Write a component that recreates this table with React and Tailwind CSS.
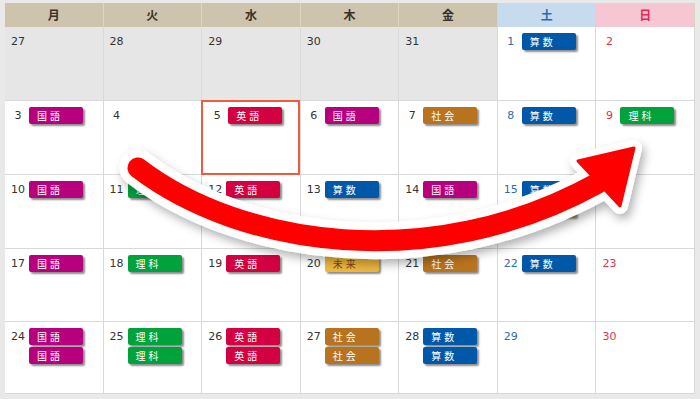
import React from "react";

const tagColors = {
  国語: "bg-[#b6007e] text-white",
  英語: "bg-[#d30042] text-white",
  理科: "bg-[#00a23b] text-white",
  算数: "bg-[#0058a9] text-white",
  社会: "bg-[#b8731e] text-white",
  未来: "bg-[#efb73c] text-[#7a4a10]",
};

const weeks = [
  [
    { d: 27, prev: true },
    { d: 28, prev: true },
    { d: 29, prev: true },
    { d: 30, prev: true },
    { d: 31, prev: true },
    { d: 1, tags: ["算数"] },
    { d: 2 },
  ],
  [
    { d: 3, tags: ["国語"] },
    { d: 4 },
    { d: 5, tags: ["英語"], active: true },
    { d: 6, tags: ["国語"] },
    { d: 7, tags: ["社会"] },
    { d: 8, tags: ["算数"] },
    { d: 9, tags: ["理科"] },
  ],
  [
    { d: 10, tags: ["国語"] },
    { d: 11, tags: ["理科"] },
    { d: 12, tags: ["英語"] },
    { d: 13, tags: ["算数"] },
    { d: 14, tags: ["国語"] },
    { d: 15, tags: ["算数", "社会"] },
    { d: 16 },
  ],
  [
    { d: 17, tags: ["国語"] },
    { d: 18, tags: ["理科"] },
    { d: 19, tags: ["英語"] },
    { d: 20, tags: ["未来"] },
    { d: 21, tags: ["社会"] },
    { d: 22, tags: ["算数"] },
    { d: 23 },
  ],
  [
    { d: 24, tags: ["国語", "国語"] },
    { d: 25, tags: ["理科", "理科"] },
    { d: 26, tags: ["英語", "英語"] },
    { d: 27, tags: ["社会", "社会"] },
    { d: 28, tags: ["算数", "算数"] },
    { d: 29 },
    { d: 30 },
  ],
];

const rowHeights = ["h-[74px]", "h-[74px]", "h-[74px]", "h-[73px]", "h-[72px]"];

const heads = [
  { t: "月", c: "bg-[#cec3ad] text-[#3a3226]" },
  { t: "火", c: "bg-[#cec3ad] text-[#3a3226]" },
  { t: "水", c: "bg-[#cec3ad] text-[#3a3226]" },
  { t: "木", c: "bg-[#cec3ad] text-[#3a3226]" },
  { t: "金", c: "bg-[#cec3ad] text-[#3a3226]" },
  { t: "土", c: "bg-[#c6dbee] text-[#2c6bb3]" },
  { t: "日", c: "bg-[#f6c6d3] text-[#e3285a]" },
];

const cjk = { fontFamily: "'Noto Sans CJK JP', sans-serif" };

function Tag({ name }) {
  return (
    <div
      className={`w-[54px] h-[17px] rounded-[2px] pl-[8px] text-[10px] leading-[17px] tracking-[3px] shadow-[2px_2px_2px_rgba(0,0,0,0.45)] ${tagColors[name]}`}
      style={cjk}
    >
      {name}
    </div>
  );
}

function Cell({ cell, col }) {
  let num = "text-[#333333]";
  if (col === 5) num = "text-[#2f6aae]";
  if (col === 6) num = "text-[#e2304f]";
  return (
    <div
      className={`relative border-r border-[#d9d9d9] pt-[6px] flex items-start ${
        cell.prev ? "bg-[#e6e6e6]" : "bg-white"
      }`}
    >
      {cell.active && (
        <div className="absolute -top-px -left-px right-0 -bottom-px border-2 border-[#ee5b3f] z-10" />
      )}
      <div
        className={`w-[20px] ml-[3px] text-center text-[11px] leading-[17px] ${num} ${
          cell.active ? "ml-[5px]" : ""
        }`}
        style={{ fontFamily: "'DejaVu Sans', sans-serif" }}
      >
        {cell.d}
      </div>
      {cell.tags && (
        <div className="ml-[1px] flex flex-col gap-[2px]">
          {cell.tags.map((t, i) => (
            <Tag key={i} name={t} />
          ))}
        </div>
      )}
    </div>
  );
}

function Arrow() {
  const shaft = "M138,168 C240,246 430,276 598,183";
  const head = "634,148 578,161 620,206";
  return (
    <svg
      className="absolute inset-0 w-[700px] h-[399px] pointer-events-none"
      viewBox="0 0 700 399"
    >
      <defs>
        <filter id="sh" x="-20%" y="-20%" width="140%" height="160%">
          <feDropShadow dx="3" dy="5" stdDeviation="5" floodColor="#000" floodOpacity="0.3" />
        </filter>
      </defs>
      <g filter="url(#sh)">
        <path d={shaft} fill="none" stroke="#fff" strokeWidth="37" strokeLinecap="round" />
        <polygon points={head} fill="#fff" stroke="#fff" strokeWidth="16" strokeLinejoin="round" />
      </g>
      <path d={shaft} fill="none" stroke="#ff0000" strokeWidth="21" strokeLinecap="round" />
      <polygon points={head} fill="#ff0000" stroke="#ff0000" strokeWidth="3" strokeLinejoin="round" />
    </svg>
  );
}

export default function App() {
  return (
    <div className="relative w-[700px] h-[399px] overflow-hidden bg-[#e9e9e9] pt-[3px] px-[5px]">
      {/* header */}
      <div className="grid grid-cols-7 h-[24px]">
        {heads.map((h) => (
          <div
            key={h.t}
            className={`flex items-center justify-center border-r border-[#ddd4c4] text-[12px] font-bold ${h.c}`}
            style={cjk}
          >
            {h.t}
          </div>
        ))}
      </div>

      {/* weeks */}
      {weeks.map((w, i) => (
        <div key={i} className={`grid grid-cols-7 border-b border-[#d9d9d9] ${rowHeights[i]}`}>
          {w.map((c, j) => (
            <Cell key={j} cell={c} col={j} />
          ))}
        </div>
      ))}

      <Arrow />
    </div>
  );
}
